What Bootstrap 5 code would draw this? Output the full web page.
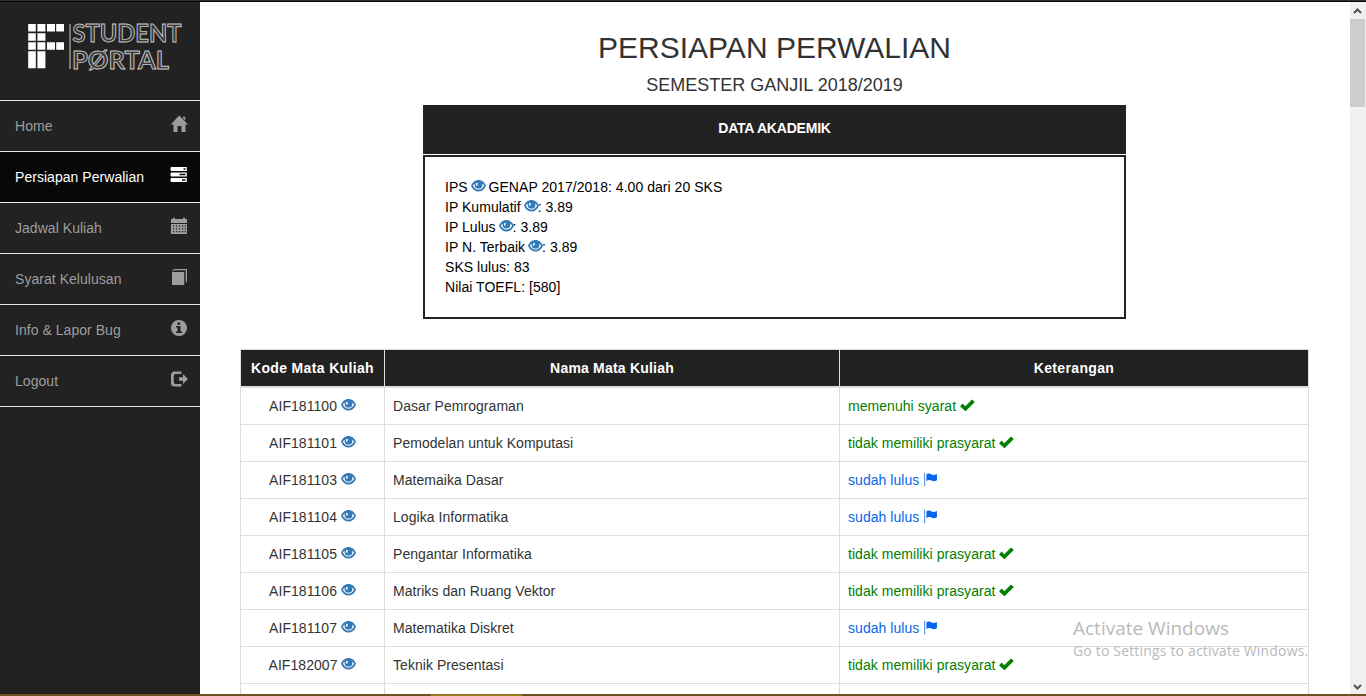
<!DOCTYPE html>
<html lang="id">
<head>
<meta charset="utf-8">
<meta name="viewport" content="width=device-width, initial-scale=1">
<title>Persiapan Perwalian - IF Student Portal</title>
<link href="https://cdn.jsdelivr.net/npm/bootstrap@5.3.0/dist/css/bootstrap.min.css" rel="stylesheet">
<style>
body{font:14px/20px "Liberation Sans",Arial,sans-serif;color:#333;height:100vh;overflow:hidden}
.top-edge{height:2px;background:linear-gradient(#303030 50%,#080808 50%)}
.bottom-edge{height:2px;background:#6b5225}
.bottom-edge div{width:91px;height:2px;margin-left:431px;background:#9b7a24}
.side{width:200px;background:#222}
.brand-area{height:98px;padding:8px 0 0 26px}
.side .nav-link{height:51px;border-top:1px solid #e7e7e7;color:#9d9d9d;padding:15px 12px 15px 15px;letter-spacing:.04px}
.side .nav-link.active{background:#080808;color:#fff}
.side .nav{border-bottom:1px solid #e7e7e7}
.side .nav-link svg{width:18px;height:18px;margin-top:-1px}
.page{padding:0 41px 0 40px}
.page h2{font-size:30px;line-height:33px;margin:29px 0 11px;font-weight:400}
.page h4{font-size:18px;line-height:20px;margin:0 0 10px;font-weight:400}
.academic{width:703px;margin-bottom:30px;color:#000}
.academic-title{height:49px;background:#222;color:#fff;padding-top:13px;letter-spacing:-.2px}
.academic-data{height:164px;border:2px solid #222;margin-top:1px;padding:20px;letter-spacing:.04px}
.g{width:14px;height:14px;fill:currentColor;vertical-align:-1px}
.eye{color:#337ab7;width:15px}
.academic .eye{margin:0 -1px 0 -1px}
.courses{width:1069px;table-layout:fixed;border-collapse:collapse;color:#333}
.courses th,.courses td{border:1px solid #ddd;padding:8px;height:37px;letter-spacing:.05px}
.courses th{background:#222;color:#fff;border-bottom-width:2px;text-align:center;white-space:nowrap;padding:8px 0;letter-spacing:.35px}
.courses th:nth-child(2){letter-spacing:.2px}
.courses td:first-child{text-align:center}
.courses td:last-child .g{width:15px;height:15px;vertical-align:-2px}
.ok{color:green}
.done{color:#0866e8}
.scroller{width:16px;background:#f0f0f0}
.scroller .thumb{width:15px;height:88px;background:#cdcdcd}
.scroller svg{width:15px;height:17px;fill:none;stroke:#505050;stroke-width:2}
.watermark{position:absolute;left:1073px;top:616px;color:#b9b9b9;font-family:"Open Sans","Noto Sans",sans-serif;white-space:nowrap}
.watermark .wm-title{font-size:19px;line-height:25px}
.watermark .wm-note{font-size:14px;line-height:20px;letter-spacing:.17px}
</style>
</head>
<body class="d-flex flex-column">
<svg class="d-none">
<symbol id="eye" viewBox="0 0 15 14"><path fill-rule="evenodd" d="M7.500 1C4 1 1.300 3.400 0 6.700 1.500 10.300 4.200 12.500 7.500 12.500S13.500 10.300 15 6.700C13.700 3.400 11 1 7.500 1ZM3.700 4.600A4 4 0 0 0 3.600 5.700a3.900 3.900 0 0 0 7.800 0 4 4 0 0 0-.1-1.100c.8.500 1.400 1.200 1.800 2.100-1.200 2.400-3.200 3.900-5.600 3.900S3.100 9.100 1.900 6.700C2.300 5.800 2.900 5.100 3.700 4.600ZM5.600 3.800C4.800 4.700 4.800 6 5.500 6.900l1.200-.6c-.4-.7-.3-1.400.3-2Z"/></symbol>
<symbol id="check" viewBox="0 0 15 14"><path d="M.1 7.900 2.500 5.100 5.300 7.700 12 1 14.800 3.500 5.500 12.700Z"/></symbol>
<symbol id="flag" viewBox="0 0 14 14"><path opacity=".7" d="M1 .8h1v12.400H1Z"/><path d="M3.200 2.200C5 1 6.500 1.500 8 2.300s3 .5 5-.5V7.800c-2 1-3.500 1-5 .2s-3-.8-4.800.4Z"/></symbol>
</svg>
<div class="top-edge flex-shrink-0"></div>
<div class="d-flex flex-grow-1 overflow-hidden">
<aside class="side flex-shrink-0">
<div class="brand-area">
<svg width="170" height="72" viewBox="26 10 170 72">
<g fill="#fff"><path d="M28.200 24h7.600v7.600h-7.600zM37.400 24h8v7.600h-8zM47 24h8v7.600h-8zM56.200 24h7.800v7.600h-7.800zM28.200 33.200h7.600v7.500h-7.600zM37.400 33.200h8v7.500h-8zM28.200 42.200h7.600v7.600h-7.600zM37.400 42.200h8v7.600h-8zM47 42.200h8v7.600h-8zM56.200 42.200h7.800v7.600h-7.800zM28.200 51.300h7.600v17h-7.600zM37.400 51.300h8v17h-8z"/></g>
<path d="M70 24v45" stroke="#aaa" stroke-width="1.300"/>
<g font-family="Lato,sans-serif" font-weight="700" font-size="24.500" fill="#383838" stroke="#c8c8c8" stroke-width=".9"><text x="72.500" y="42.200" textLength="109" lengthAdjust="spacingAndGlyphs">STUDENT</text><text x="72" y="68.700" textLength="97" lengthAdjust="spacingAndGlyphs">PØRTAL</text></g>
</svg>
</div>
<nav class="nav flex-column">
<a class="nav-link d-flex justify-content-between" href="#">Home<svg fill="currentColor" viewBox="0 0 18 18"><path d="M9.200.5 18 9.500h-2.500V17h-4v-6H7.500v6h-4V9.500H.7ZM13 1.800h2.200v4L13 3.600Z"/></svg></a>
<a class="nav-link active d-flex justify-content-between" href="#">Persiapan Perwalian<svg fill="currentColor" viewBox="0 0 18 18"><path fill-rule="evenodd" d="M1.200 1h15.600v4H1.200L.5 4V2ZM13.500 2.300v1.400h2V2.300ZM1.200 6.500h15.600v4H1.200l-.7-1v-2ZM9.500 7.800v1.400h6V7.800ZM1.200 12h15.600v4H1.200l-.7-1v-2ZM12 13.300v1.400h3.500v-1.400Z"/></svg></a>
<a class="nav-link d-flex justify-content-between" href="#">Jadwal Kuliah<svg fill="currentColor" viewBox="0 0 18 18"><path d="M1 2h2V.8h2V2h8V.8h2V2h2v4H1Z"/><path fill-rule="evenodd" d="M1 7h16v10H1ZM3 8.500v1.200h1.300V8.500ZM6 8.500v1.200h1.300V8.500ZM9 8.500v1.200h1.300V8.500ZM12 8.500v1.200h1.300V8.500ZM14.700 8.500v1.200h1.300V8.500ZM3 11.200v1.200h1.300v-1.200ZM6 11.200v1.200h1.300v-1.200ZM9 11.200v1.200h1.300v-1.200ZM12 11.200v1.200h1.300v-1.200ZM14.700 11.200v1.200h1.300v-1.200ZM3 14v1.200h1.300V14ZM6 14v1.200h1.300V14ZM9 14v1.200h1.300V14ZM12 14v1.200h1.300V14ZM14.700 14v1.200h1.300V14Z"/></svg></a>
<a class="nav-link d-flex justify-content-between" href="#">Syarat Kelulusan<svg fill="currentColor" viewBox="0 0 18 18"><path d="M2 4h12.200v13H2ZM4 1h13v12.500L15.700 15V2.300H4.300L3 3.300H2Z"/></svg></a>
<a class="nav-link d-flex justify-content-between" href="#">Info &amp; Lapor Bug<svg fill="currentColor" viewBox="0 0 18 18"><path fill-rule="evenodd" d="M9 1a8 8 0 1 1 0 16A8 8 0 0 1 9 1ZM7.500 3.500v2.300h2.700V3.500ZM6 7v1.400h1.500v4H6V14h6v-1.600h-1.500V7Z"/></svg></a>
<a class="nav-link d-flex justify-content-between" href="#">Logout<svg fill="currentColor" viewBox="0 0 18 18"><path d="M4.500 1.500h7V4H5.500Q3.800 4 3.800 5.700v6.600Q3.800 14 5.500 14h6v2.500h-7Q1 16.500 1 13V5Q1 1.500 4.500 1.500ZM13 4l5 5-5 5v-3.300H9V7.300h4Z"/></svg></a>
</nav>
</aside>
<main class="page flex-grow-1 overflow-hidden">
<h2 class="text-center">PERSIAPAN PERWALIAN</h2>
<h4 class="text-center">SEMESTER GANJIL 2018/2019</h4>
<section class="academic mx-auto">
<div class="academic-title text-center fw-bold">DATA AKADEMIK</div>
<div class="academic-data">
<div>IPS <svg class="g eye"><use href="#eye"/></svg> GENAP 2017/2018: 4.00 dari 20 SKS</div>
<div>IP Kumulatif <svg class="g eye"><use href="#eye"/></svg>: 3.89</div>
<div>IP Lulus <svg class="g eye"><use href="#eye"/></svg>: 3.89</div>
<div>IP N. Terbaik <svg class="g eye"><use href="#eye"/></svg>: 3.89</div>
<div>SKS lulus: 83</div>
<div>Nilai TOEFL: [580]</div>
</div>
</section>
<table class="courses">
<colgroup><col style="width:144px"><col style="width:455px"><col></colgroup>
<thead><tr><th>Kode Mata Kuliah</th><th>Nama Mata Kuliah</th><th>Keterangan</th></tr></thead>
<tbody>
<tr><td>AIF181100 <svg class="g eye"><use href="#eye"/></svg></td><td>Dasar Pemrograman</td><td class="ok">memenuhi syarat <svg class="g"><use href="#check"/></svg></td></tr>
<tr><td>AIF181101 <svg class="g eye"><use href="#eye"/></svg></td><td>Pemodelan untuk Komputasi</td><td class="ok">tidak memiliki prasyarat <svg class="g"><use href="#check"/></svg></td></tr>
<tr><td>AIF181103 <svg class="g eye"><use href="#eye"/></svg></td><td>Matemaika Dasar</td><td class="done">sudah lulus <svg class="g"><use href="#flag"/></svg></td></tr>
<tr><td>AIF181104 <svg class="g eye"><use href="#eye"/></svg></td><td>Logika Informatika</td><td class="done">sudah lulus <svg class="g"><use href="#flag"/></svg></td></tr>
<tr><td>AIF181105 <svg class="g eye"><use href="#eye"/></svg></td><td>Pengantar Informatika</td><td class="ok">tidak memiliki prasyarat <svg class="g"><use href="#check"/></svg></td></tr>
<tr><td>AIF181106 <svg class="g eye"><use href="#eye"/></svg></td><td>Matriks dan Ruang Vektor</td><td class="ok">tidak memiliki prasyarat <svg class="g"><use href="#check"/></svg></td></tr>
<tr><td>AIF181107 <svg class="g eye"><use href="#eye"/></svg></td><td>Matematika Diskret</td><td class="done">sudah lulus <svg class="g"><use href="#flag"/></svg></td></tr>
<tr><td>AIF182007 <svg class="g eye"><use href="#eye"/></svg></td><td>Teknik Presentasi</td><td class="ok">tidak memiliki prasyarat <svg class="g"><use href="#check"/></svg></td></tr>
<tr><td></td><td></td><td></td></tr>
</tbody>
</table>
</main>
<div class="scroller d-flex flex-column flex-shrink-0">
<svg viewBox="0 0 15 17"><path d="M4 11l3.500-3.500L11 11"/></svg>
<div class="thumb"></div>
<svg class="mt-auto" viewBox="0 0 15 17"><path d="M4 8l3.500 3.500L11 8"/></svg>
</div>
</div>
<div class="bottom-edge flex-shrink-0"><div></div></div>
<div class="watermark"><div class="wm-title">Activate Windows</div><div class="wm-note">Go to Settings to activate Windows.</div></div>
<script src="https://cdn.jsdelivr.net/npm/bootstrap@5.3.0/dist/js/bootstrap.bundle.min.js"></script>
</body>
</html>
